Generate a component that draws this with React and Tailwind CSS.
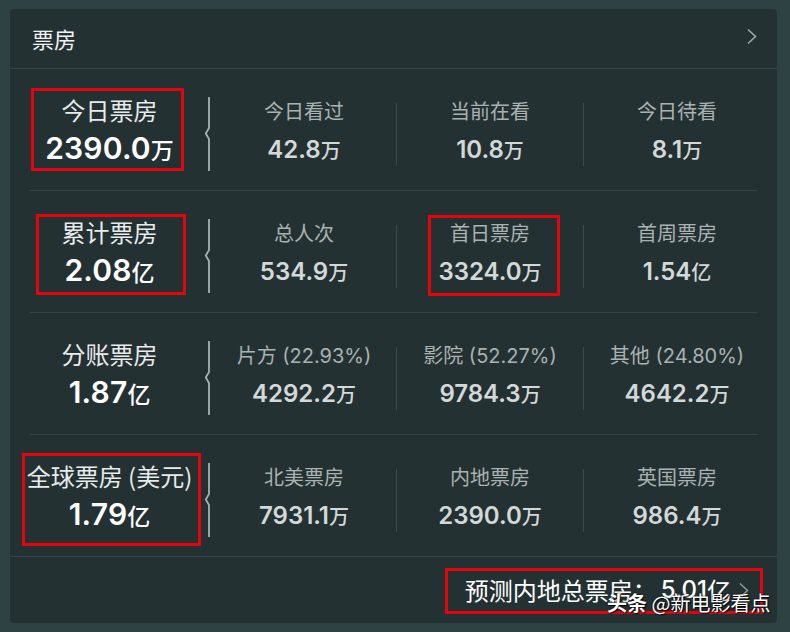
import React from "react";

const NUM = { fontFamily: 'Inter, "Noto Sans CJK SC", sans-serif' };
const CJK = { fontFamily: '"Noto Sans CJK SC", "Liberation Sans", sans-serif' };
const LBL = { fontFamily: 'Inter, "Noto Sans CJK SC", sans-serif' };

function Bracket() {
  return (
    <svg width="8" height="74" viewBox="0 0 8 74" className="shrink-0">
      <path d="M5 0 V31 L1.8 36.5 L5 42 V74" stroke="#a7b1b1" strokeWidth="1.8" fill="none" />
    </svg>
  );
}

function VDiv() {
  return <div className="w-px h-[63px] bg-[#3a4a4b] shrink-0" />;
}

function Val({ n, u, big }) {
  return (
    <div className={big ? "leading-[40px] mt-[3px] text-white" : "leading-[40px] mt-[3px] text-[#d3d8d8]"}>
      <span style={NUM} className={big ? "text-[30px] font-semibold tracking-[0.2px]" : "text-[24px] font-semibold"}>{n}</span>
      <span style={CJK} className={big ? "text-[23px] font-medium" : "text-[20px] font-medium"}>{u}</span>
    </div>
  );
}

function Cell({ label, n, u, w }) {
  return (
    <div className={`${w} flex flex-col items-center shrink-0`}>
      <div style={LBL} className="text-[20px] leading-[30px] text-[#a9b1b1] whitespace-nowrap">{label}</div>
      <Val n={n} u={u} />
    </div>
  );
}

function Row({ main, cells, last }) {
  return (
    <>
      <div className="h-[121px] flex items-center shrink-0 pt-[9px]">
        <div className="w-[194px] flex flex-col items-center shrink-0 pl-[5px]">
          <div style={CJK} className="text-[24px] leading-[30px] text-[#e8ebeb] whitespace-nowrap">{main.label}</div>
          <Val n={main.n} u={main.u} big />
        </div>
        <Bracket />
        <Cell {...cells[0]} w="w-[184px]" />
        <VDiv />
        <Cell {...cells[1]} w="w-[186px]" />
        <VDiv />
        <Cell {...cells[2]} w="w-[186px]" />
      </div>
      {last ? (
        <div className="h-px bg-[#364647] shrink-0" />
      ) : (
        <div className="h-px bg-[#34444a] mx-[20px] shrink-0" />
      )}
    </>
  );
}

function Box({ cls }) {
  return <div className={`absolute border-[3px] border-[#e3040c] pointer-events-none ${cls}`} />;
}

export default function App() {
  return (
    <div className="relative w-[790px] h-[632px] bg-[#2e4243] pt-[9px] pl-[10px] overflow-hidden">
      <div className="w-[767px] h-[614px] bg-[#243132] rounded-[4px] flex flex-col">
        <div className="h-[59px] flex items-center justify-between pl-[22px] pr-[19px] shrink-0">
          <div style={CJK} className="text-[22px] text-[#f1f3f3] leading-none -mt-[2px]">票房</div>
          <svg width="12" height="17" viewBox="0 0 12 17" className="-mt-[4px]">
            <path d="M2 1.5 L9.5 8.5 L2 15.5" stroke="#9ea7a7" strokeWidth="1.6" fill="none" />
          </svg>
        </div>
        <div className="h-px bg-[#34444a] shrink-0" />
        <Row
          main={{ label: "今日票房", n: "2390.0", u: "万" }}
          cells={[
            { label: "今日看过", n: "42.8", u: "万" },
            { label: "当前在看", n: "10.8", u: "万" },
            { label: "今日待看", n: "8.1", u: "万" },
          ]}
        />
        <Row
          main={{ label: "累计票房", n: "2.08", u: "亿" }}
          cells={[
            { label: "总人次", n: "534.9", u: "万" },
            { label: "首日票房", n: "3324.0", u: "万" },
            { label: "首周票房", n: "1.54", u: "亿" },
          ]}
        />
        <Row
          main={{ label: "分账票房", n: "1.87", u: "亿" }}
          cells={[
            { label: "片方 (22.93%)", n: "4292.2", u: "万" },
            { label: "影院 (52.27%)", n: "9784.3", u: "万" },
            { label: "其他 (24.80%)", n: "4642.2", u: "万" },
          ]}
        />
        <Row
          last
          main={{ label: "全球票房 (美元)", n: "1.79", u: "亿" }}
          cells={[
            { label: "北美票房", n: "7931.1", u: "万" },
            { label: "内地票房", n: "2390.0", u: "万" },
            { label: "英国票房", n: "986.4", u: "万" },
          ]}
        />
        <div className="flex-1 flex items-center justify-end pr-[27px]">
          <div className="flex items-center gap-[6px] text-white">
            <span style={CJK} className="text-[24px] leading-none">预测内地总票房：</span>
            <span style={NUM} className="text-[24px] font-medium leading-none -ml-[2px]">5.01</span>
            <span style={CJK} className="text-[24px] leading-none -ml-[6px]">亿</span>
            <svg width="12" height="17" viewBox="0 0 12 17" className="ml-[1px]">
              <path d="M2 1.5 L9.5 8.5 L2 15.5" stroke="#8f9999" strokeWidth="1.5" fill="none" />
            </svg>
          </div>
        </div>
      </div>

      <Box cls="left-[31px] top-[88px] w-[153px] h-[83px]" />
      <Box cls="left-[36px] top-[214px] w-[150px] h-[81px]" />
      <Box cls="left-[428px] top-[215px] w-[132px] h-[81px]" />
      <Box cls="left-[22px] top-[453px] w-[179px] h-[93px]" />
      <Box cls="left-[445px] top-[568px] w-[318px] h-[46px]" />

      <div
        style={{ ...CJK, textShadow: "0 0 2px rgba(0,0,0,0.9), 1px 1px 1px rgba(0,0,0,0.8)" }}
        className="absolute left-[607px] top-[590px] text-[20px] leading-[26px] text-white whitespace-nowrap"
      >
        <span className="font-bold">头条</span> @新电影看点
      </div>
    </div>
  );
}
